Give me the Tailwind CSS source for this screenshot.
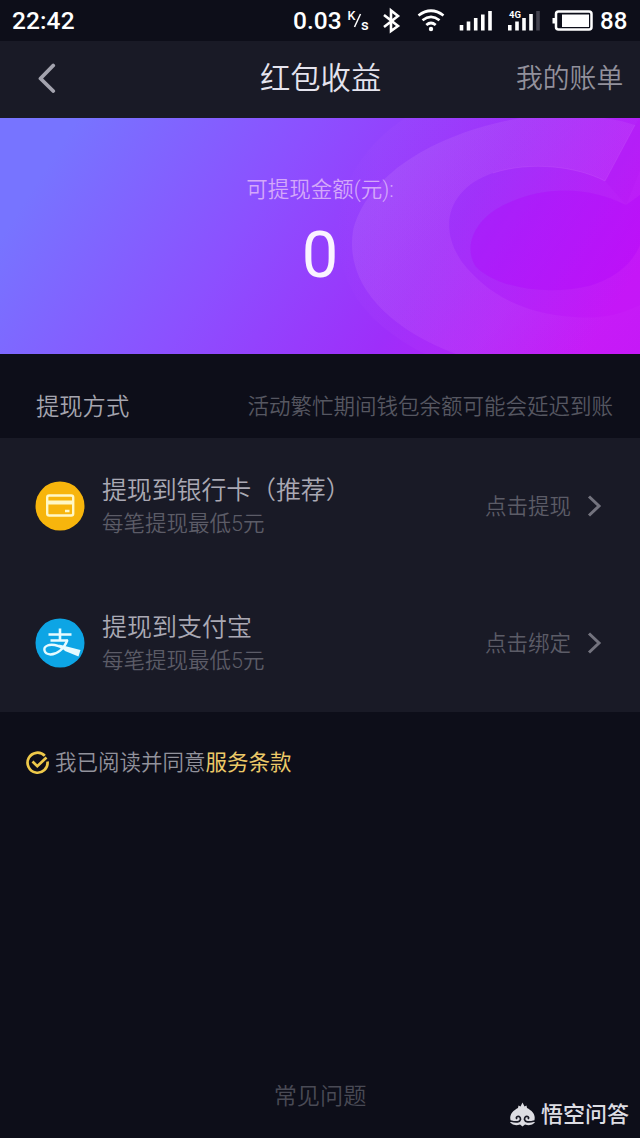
<!DOCTYPE html>
<html lang="zh-CN">
<head>
<meta charset="utf-8">
<title>红包收益</title>
<script src="https://cdn.jsdelivr.net/npm/@tailwindcss/browser@4"></script>
</head>
<body class="bg-[#0d0e19]">
<div class="flex h-[1138px] w-[640px] flex-col overflow-hidden bg-[#0d0e19] font-['Roboto','Noto_Sans_CJK_SC',sans-serif] whitespace-nowrap">

  <!-- status bar -->
  <div class="flex h-[41px] shrink-0 items-center pl-3 text-[24.500px] font-medium leading-[39px] text-white">
    <span class="w-[281px] pb-px tracking-[0.100px]">22:42</span>
    <span class="w-[54px] pb-px">0.03</span>
    <svg class="h-10 w-[293px]" viewBox="347 0 293 40" fill="none">
      <text x="347.500" y="19" font-size="12.500" fill="#fff">K</text>
      <path d="M354.500 26L360.500 13" stroke="#fff" stroke-width="1.500"/>
      <text x="361" y="28.500" font-size="15" fill="#fff">s</text>
      <path d="M384 14L398 25L391 30V9.500L398 15L384 26" stroke="#fff" stroke-width="2.600"/>
      <path d="M418.500 14.500Q431 5 443.500 14.500M422.500 19.300Q431 12.500 439.500 19.300M426.300 24Q431 20 435.700 24" stroke="#fff" stroke-width="2.700"/>
      <circle cx="431" cy="28" r="2.200" fill="#fff"/>
      <path d="M461.500 24v5.500M468.500 20.500v9M475.700 17v12.500M482.800 13.500v16M490 10v19.500" stroke="#fff" stroke-width="3.600"/>
      <text x="509" y="17" font-size="9.500" font-weight="700" fill="#fff">4G</text>
      <path d="M509.800 24v5.500M517 20.500v9M524 17v12.500M531 13v16.500" stroke="#fff" stroke-width="3.600"/>
      <path d="M538 10v19.500" stroke="#44434f" stroke-width="3.600"/>
      <rect x="556" y="10.500" width="35.500" height="18" rx="2.500" stroke="#fff" stroke-width="2.500"/>
      <rect x="562" y="13.500" width="27" height="12.500" fill="#fff"/>
      <rect x="552.500" y="17" width="3" height="5.500" fill="#fff"/>
      <text x="600" y="28" font-size="24" fill="#fff">88</text>
    </svg>
  </div>

  <!-- title bar -->
  <header class="grid h-[77px] shrink-0 grid-cols-[260px_1fr_260px] items-center bg-[#191a26] pb-px">
    <svg class="mb-[5px] ml-9 h-8 w-6" viewBox="0 0 24 32" fill="none" stroke="#a3a3ae" stroke-width="3.800" stroke-linecap="round" stroke-linejoin="round"><path d="M17.200 4.500L4.500 17.500L17.200 30"/></svg>
    <h1 class="text-center text-[30.300px] leading-[40px] font-[350] text-[#e5e4ee]">红包收益</h1>
    <span class="pr-[18px] text-right text-[26.800px] leading-[40px] font-[350] text-[#92919c]">我的账单</span>
  </header>

  <!-- balance banner -->
  <section class="relative h-[236px] shrink-0 overflow-hidden">
    <svg class="absolute inset-0 h-full w-full" viewBox="0 118 640 236">
      <defs>
        <linearGradient id="bg" gradientUnits="userSpaceOnUse" x1="70" y1="130" x2="535" y2="430">
          <stop offset="0" stop-color="#7774ff"/>
          <stop offset=".36" stop-color="#8c50ff"/>
          <stop offset=".68" stop-color="#9e2efa"/>
          <stop offset="1" stop-color="#c511f7"/>
        </linearGradient>
        <linearGradient id="veil" gradientUnits="userSpaceOnUse" x1="400" y1="150" x2="640" y2="345">
          <stop offset="0" stop-color="#c884f8" stop-opacity=".2"/>
          <stop offset=".6" stop-color="#cc60f8" stop-opacity=".18"/>
          <stop offset="1" stop-color="#d030f8" stop-opacity=".08"/>
        </linearGradient>
        <linearGradient id="faint" gradientUnits="userSpaceOnUse" x1="335" y1="0" x2="380" y2="0">
          <stop offset="0" stop-color="#c66bf8" stop-opacity="0"/>
          <stop offset="1" stop-color="#c66bf8" stop-opacity=".06"/>
        </linearGradient>
      </defs>
      <rect y="118" width="640" height="236" fill="url(#bg)"/>
      <path d="M405 118C350 155 327 210 342 265C352 305 384 333 425 354H640V118Z" fill="url(#faint)"/>
      <path d="M520 118C426 135 365 180 353 231C345 281 384 327 456 354H640V305C618 316 597 319 574 317C522 314 486 293 462 262C437 226 449 188 493 173C530 161 576 166 605 181L635 125Q620 120 604 118Z" fill="url(#veil)"/>
      <path d="M626 205C590 187 547 185 508 203C473 218 463 248 476 267C500 290 550 295 589 286C617 278 633 262 640 245V195Z" fill="#b000fb" fill-opacity=".3"/>
      <path d="M605 181L635 125L640 118V170L626 205Z" fill="#b010ef" fill-opacity=".15"/>
      <path d="M493 173C530 161 576 166 605 181L635 125" fill="none" stroke="#d46cf8" stroke-opacity=".2"/>
    </svg>
    <div class="relative flex flex-col items-center pt-[56px]">
      <p class="text-[21.500px] leading-[32px] font-[350] text-[#d4a8fa]">可提现金额(元):</p>
      <p class="mt-[9px] text-[65px] leading-[80px] text-[#faf3ff]">0</p>
    </div>
  </section>

  <!-- section heading -->
  <div class="flex h-[84px] shrink-0 items-center justify-between pt-[22px] pr-[27px] pl-9 font-[350]">
    <h2 class="text-[23.300px] text-[#a5a5af]">提现方式</h2>
    <span class="text-[21.500px] text-[#565761]">活动繁忙期间钱包余额可能会延迟到账</span>
  </div>

  <!-- withdrawal methods -->
  <main class="h-[274px] shrink-0 bg-[#191a26] font-[350]">
    <div class="flex h-[137px] items-center pl-[35px]">
      <svg class="mb-[2px] h-[50px] w-[50px]" viewBox="0 0 50 50"><circle cx="25" cy="25" r="24.500" fill="#f7b50c"/><rect x="12.200" y="14.500" width="26" height="20" rx="2" fill="none" stroke="#fff8c6" stroke-width="2.400"/><path d="M12 21.500H38" stroke="#fff8c6" stroke-width="4"/><path d="M30 30H34.500" stroke="#fff8c6" stroke-width="2.500"/></svg>
      <div class="ml-[17px] w-[383px] pt-px">
        <p class="text-[25px] leading-[34px] tracking-[-0.150px] text-[#aaa9b4]">提现到银行卡（推荐）</p>
        <p class="text-[21.500px] leading-[32px] text-[#5c5c67]">每笔提现最低5元</p>
      </div>
      <span class="text-[21.500px] leading-[32px] text-[#5c5c67]">点击提现</span>
      <svg class="mb-[2px] ml-4 h-6 w-4" viewBox="0 0 16 24" fill="none" stroke="#73737e" stroke-width="3"><path d="M2 2.500L12 12L2 21.500"/></svg>
    </div>
    <div class="flex h-[137px] items-center pl-[35px]">
      <svg class="mb-[2px] h-[50px] w-[50px]" viewBox="0 0 50 50" fill="none"><circle cx="25" cy="25" r="24.500" fill="#0da5e5"/><path d="M13.500 16.500H36.500M25 10.500V22.500M15.500 22.500H33" stroke="#e6fbff" stroke-width="2.600"/><path d="M32.500 22C29 31 22 36.500 15.500 36.500C8.500 36 7.500 29.500 12.500 27.500C18 25 25 28 32 31.500" stroke="#e6fbff" stroke-width="2.400"/><path d="M24 26.500L45.500 32L43.500 38.500L30 33Z" fill="#e6fbff"/></svg>
      <div class="ml-[17px] w-[383px] pt-px">
        <p class="text-[25px] leading-[34px] text-[#aaa9b4]">提现到支付宝</p>
        <p class="text-[21.500px] leading-[32px] text-[#5c5c67]">每笔提现最低5元</p>
      </div>
      <span class="text-[21.500px] leading-[32px] text-[#5c5c67]">点击绑定</span>
      <svg class="mb-[2px] ml-4 h-6 w-4" viewBox="0 0 16 24" fill="none" stroke="#73737e" stroke-width="3"><path d="M2 2.500L12 12L2 21.500"/></svg>
    </div>
  </main>

  <!-- agreement -->
  <div class="mt-[35px] flex h-8 shrink-0 items-center pl-[26px] text-[21.500px] leading-[32px] font-[350]">
    <svg class="mr-[5px] h-6 w-6" viewBox="0 0 24 24" fill="none" stroke="#eec94a" stroke-width="2.700"><path d="M18.800 4.800A10 10 0 1 0 21.500 10.500"/><path d="M6.500 10.500L11.300 15.200L20.500 6.500"/></svg>
    <span class="text-[#92929c]">我已阅读并同意</span><a class="font-normal text-[#ecc968]">服务条款</a>
  </div>

  <!-- footer -->
  <footer class="relative mt-auto h-[61px] shrink-0">
    <p class="text-center text-[23.200px] leading-[38px] font-[350] text-[#494a55]">常见问题</p>
    <div class="absolute right-[11px] bottom-[7px] flex items-center text-[22px] font-bold leading-[32px] text-[#dddde3]">
      <svg class="mr-[5px] h-[26px] w-[27px]" viewBox="0 0 27 26"><path d="M1.500 18C0 12 5 8 9 6L9.500 3.500L11.500 4.500L13.500 .5L15.500 4.500L17.500 3.500L18 6C22 8 27 12 25.500 18Q24 19.500 26 20.500Q22 24.500 16 22.500L13.500 24.500L11 22.500Q5 24.500 1 20.500Q3 19.500 1.500 18Z" fill="#dddde3"/><path d="M1.500 19Q10.500 21.500 11.500 17.500Q11.500 14 8.500 14.500Q6.500 15.500 8 17M25.500 19Q16.500 21.500 15.500 17.500Q15.500 14 18.500 14.500Q20.500 15.500 19 17" fill="none" stroke="#171824" stroke-width="1.700"/></svg>
      <span class="font-medium">悟空问答</span>
    </div>
  </footer>
</div>
</body>
</html>
